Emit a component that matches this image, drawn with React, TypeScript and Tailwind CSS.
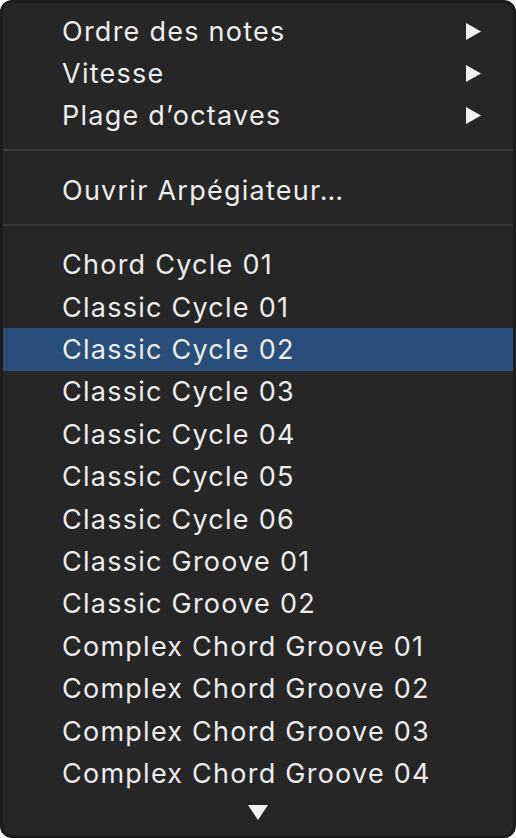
import React from 'react';

const submenus = ['Ordre des notes', 'Vitesse', 'Plage d’octaves'];
const presets = [
  'Chord Cycle 01',
  'Classic Cycle 01',
  'Classic Cycle 02',
  'Classic Cycle 03',
  'Classic Cycle 04',
  'Classic Cycle 05',
  'Classic Cycle 06',
  'Classic Groove 01',
  'Classic Groove 02',
  'Complex Chord Groove 01',
  'Complex Chord Groove 02',
  'Complex Chord Groove 03',
  'Complex Chord Groove 04',
];

const Row: React.FC<{ label: string; active?: boolean; submenu?: boolean }> = ({ label, active, submenu }) => (
  <div
    className={`h-[42.4px] flex items-center justify-between pl-[59px] pr-[32px] ${
      active ? 'bg-[#284e79]' : ''
    }`}
  >
    <span className="text-[27px] leading-none text-[#ececec] tracking-[1.25px]">{label}</span>
    {submenu && (
      <svg width="15" height="17" viewBox="0 0 15 17">
        <path d="M0 0 L15 8.5 L0 17 Z" fill="#f2f2f2" />
      </svg>
    )}
  </div>
);

const Separator = () => (
  <div className="pt-[12px] pb-[18px]">
    <div className="h-[2px] bg-[#393939]" />
  </div>
);

export default function App() {
  return (
    <div className="w-[516px] h-[838px] bg-white" style={{ fontFamily: 'Inter, "Noto Sans", sans-serif' }}>
      <div className="h-full rounded-[12px] border-[3px] border-[#1c1c1c] bg-[#262626] pt-[7px] flex flex-col">
        {submenus.map((s) => (
          <Row key={s} label={s} submenu />
        ))}
        <Separator />
        <Row label="Ouvrir Arpégiateur…" />
        <Separator />
        {presets.map((p) => (
          <Row key={p} label={p} active={p === 'Classic Cycle 02'} />
        ))}
        <div className="flex justify-center pt-[10px]">
          <svg width="20" height="15" viewBox="0 0 20 15">
            <path d="M0 0 L20 0 L10 15 Z" fill="#f2f2f2" />
          </svg>
        </div>
      </div>
    </div>
  );
}
